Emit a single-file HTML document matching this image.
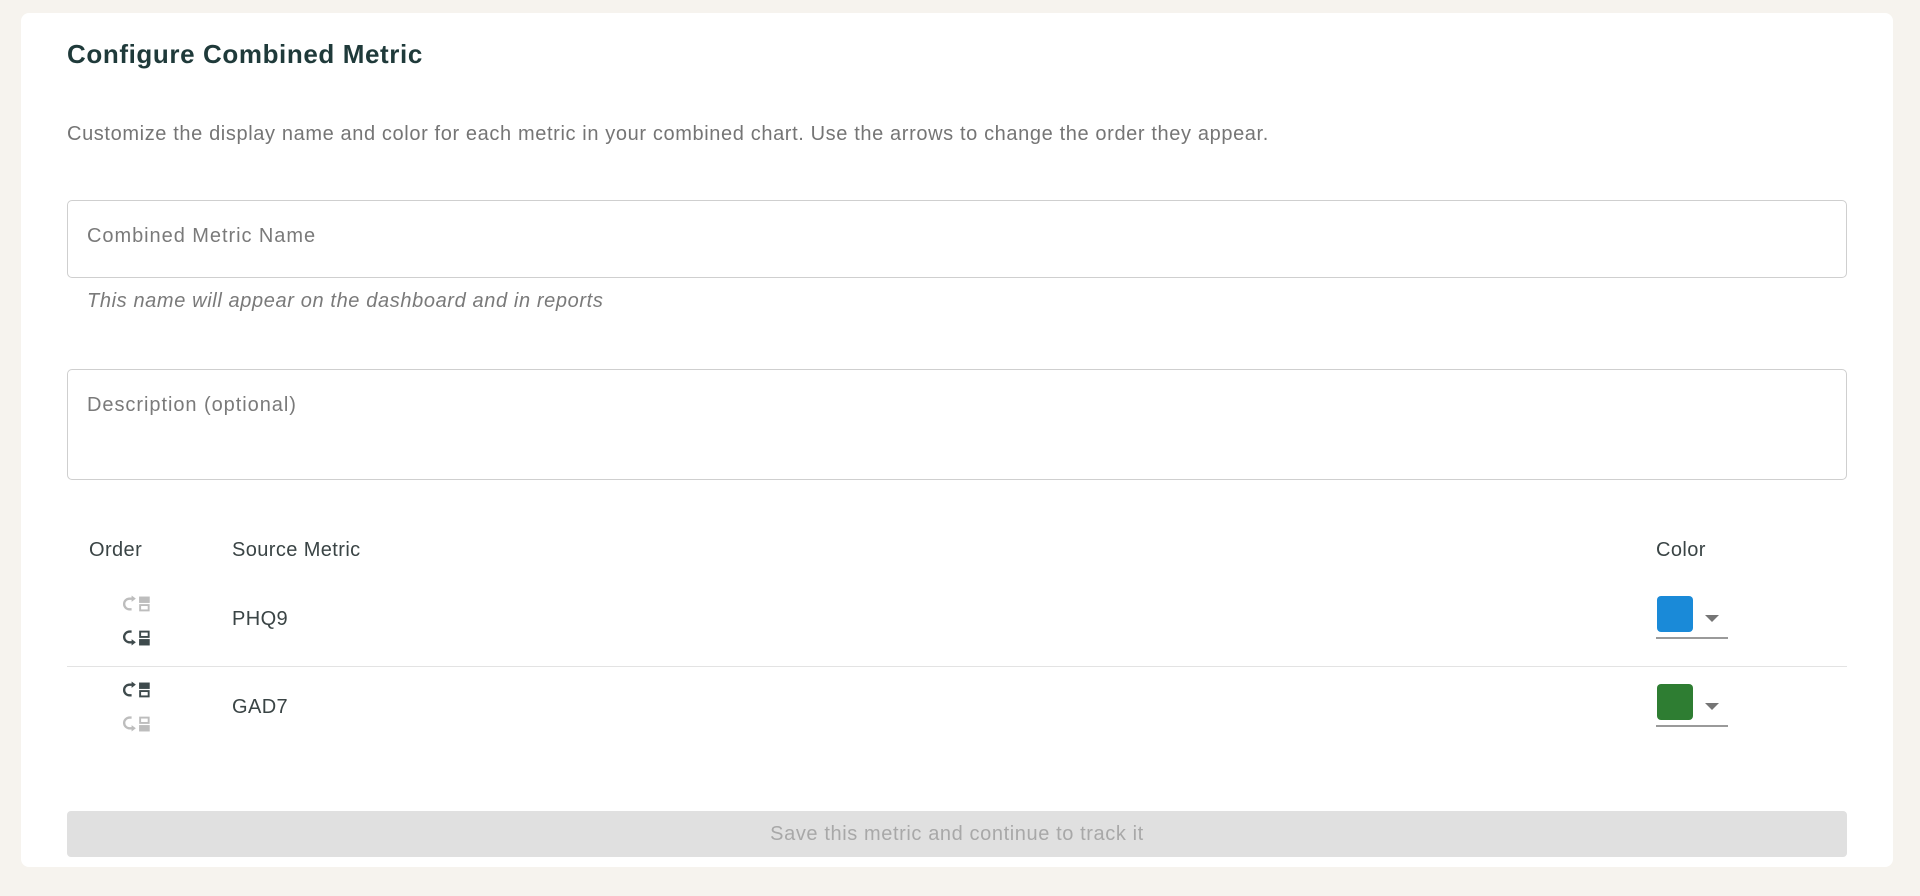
<!DOCTYPE html>
<html><head><meta charset="utf-8"><style>
*{box-sizing:border-box;margin:0;padding:0}
html,body{width:1920px;height:896px;overflow:hidden;background:#f6f3ee;font-family:"Liberation Sans",sans-serif}
.card{position:absolute;left:21px;top:13px;width:1872px;height:854px;background:#fff;border-radius:8px}
.abs{position:absolute;white-space:nowrap}
.title{left:67px;top:39px;font-size:26px;font-weight:bold;color:#1f3a3a;letter-spacing:0.6px}
.desc{left:67px;top:123px;font-size:20px;color:#757575;letter-spacing:0.62px}
.box{position:absolute;left:67px;width:1780px;border:1.5px solid #cfcfcf;border-radius:5px}
.ph{font-size:20px;color:#7a7a7a;letter-spacing:0.95px}
.help{left:87px;top:290px;font-size:20px;font-style:italic;color:#7a7a7a;letter-spacing:0.62px}
.hd{font-size:20px;color:#3a4445;top:539px;letter-spacing:0.4px}
.cell{font-size:20px;color:#3a4445;letter-spacing:0.4px}
.div{position:absolute;left:67px;width:1780px;top:666px;height:1px;background:#e3e3e3}
.sw{position:absolute;left:1657px;width:36px;height:36px;border-radius:4px}
.ul{position:absolute;left:1656px;width:72px;height:2px;background:#9a9a9a}
.tri{position:absolute;left:1705px;width:0;height:0;border-left:7px solid transparent;border-right:7px solid transparent;border-top:7px solid #757575}
.btn{position:absolute;left:67px;top:811px;width:1780px;height:46px;background:#e0e0e0;border-radius:4px;text-align:center;line-height:46px;font-size:20px;color:#a8a8a8;letter-spacing:0.6px}
svg{position:absolute}
</style></head><body>
<div class="card"></div>
<div class="abs title">Configure Combined Metric</div>
<div class="abs desc">Customize the display name and color for each metric in your combined chart. Use the arrows to change the order they appear.</div>
<div class="box" style="top:200px;height:78px"></div>
<div class="abs ph" style="left:87px;top:225px">Combined Metric Name</div>
<div class="abs help">This name will appear on the dashboard and in reports</div>
<div class="box" style="top:369px;height:111px"></div>
<div class="abs ph" style="left:87px;top:394px">Description (optional)</div>
<div class="abs hd" style="left:89px">Order</div>
<div class="abs hd" style="left:232px">Source Metric</div>
<div class="abs hd" style="left:1656px">Color</div>

<svg style="left:122px;top:594px" width="32" height="20" viewBox="0 0 30 18">
<g fill="none" stroke="#bdbdbd" stroke-width="2.2"><path d="M10 4 H7 A5 5 0 0 0 7 14 H9"/></g>
<path d="M9 1 L13 4 L9 7Z" fill="#bdbdbd"/>
<rect x="16" y="2" width="10" height="6" fill="#bdbdbd"/><rect x="17" y="10" width="8" height="5" fill="none" stroke="#bdbdbd" stroke-width="1.8"/>
</svg>
<svg style="left:122px;top:628px" width="32" height="20" viewBox="0 0 30 18">
<g fill="none" stroke="#3e4a4c" stroke-width="2.2"><path d="M9 3 H7 A5 5 0 0 0 7 13 H10"/></g>
<path d="M9 10 L13 13 L9 16Z" fill="#3e4a4c"/>
<rect x="17" y="3" width="8" height="5" fill="none" stroke="#3e4a4c" stroke-width="1.8"/><rect x="16" y="10" width="10" height="6" fill="#3e4a4c"/>
</svg>
<div class="abs cell" style="left:232px;top:608px">PHQ9</div>
<div class="sw" style="top:596px;background:#1a8ad8"></div>
<div class="tri" style="top:615px"></div>
<div class="ul" style="top:637px"></div>

<div class="div"></div>

<svg style="left:122px;top:680px" width="32" height="20" viewBox="0 0 30 18">
<g fill="none" stroke="#3e4a4c" stroke-width="2.2"><path d="M10 4 H7 A5 5 0 0 0 7 14 H9"/></g>
<path d="M9 1 L13 4 L9 7Z" fill="#3e4a4c"/>
<rect x="16" y="2" width="10" height="6" fill="#3e4a4c"/><rect x="17" y="10" width="8" height="5" fill="none" stroke="#3e4a4c" stroke-width="1.8"/>
</svg>
<svg style="left:122px;top:714px" width="32" height="20" viewBox="0 0 30 18">
<g fill="none" stroke="#bdbdbd" stroke-width="2.2"><path d="M9 3 H7 A5 5 0 0 0 7 13 H10"/></g>
<path d="M9 10 L13 13 L9 16Z" fill="#bdbdbd"/>
<rect x="17" y="3" width="8" height="5" fill="none" stroke="#bdbdbd" stroke-width="1.8"/><rect x="16" y="10" width="10" height="6" fill="#bdbdbd"/>
</svg>
<div class="abs cell" style="left:232px;top:696px">GAD7</div>
<div class="sw" style="top:684px;background:#2e7d32"></div>
<div class="tri" style="top:703px"></div>
<div class="ul" style="top:725px"></div>

<div class="btn">Save this metric and continue to track it</div>
</body></html>
